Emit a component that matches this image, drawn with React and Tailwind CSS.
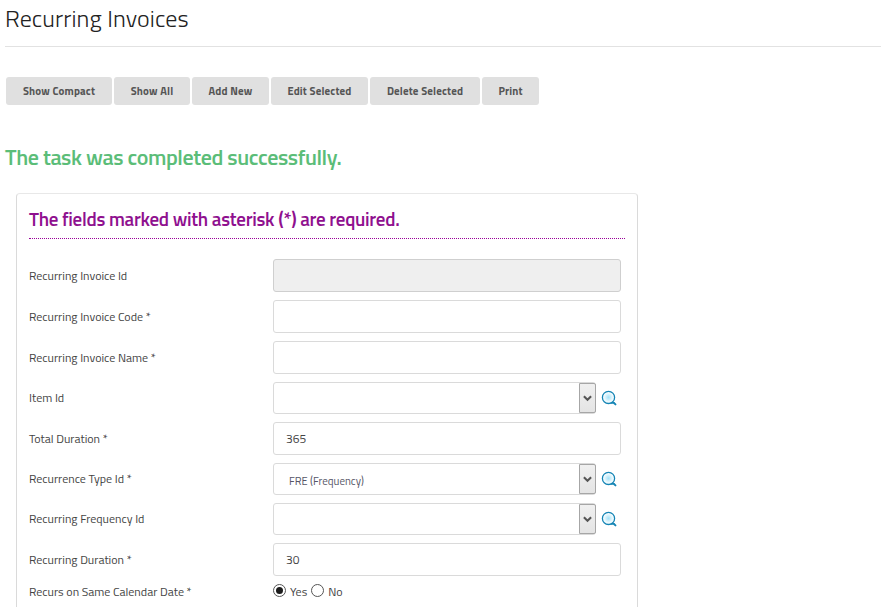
import React from "react";

const actions = [
  { label: "Show Compact", width: "w-[106px]" },
  { label: "Show All", width: "w-[76px]" },
  { label: "Add New", width: "w-[77px]" },
  { label: "Edit Selected", width: "w-[97px]" },
  { label: "Delete Selected", width: "w-[110px]" },
  { label: "Print", width: "w-[57px]" },
];

const fields = [
  { label: "Recurring Invoice Id", type: "disabled" },
  { label: "Recurring Invoice Code *", type: "text" },
  { label: "Recurring Invoice Name *", type: "text" },
  { label: "Item Id", type: "select" },
  { label: "Total Duration *", type: "text", value: "365" },
  { label: "Recurrence Type Id *", type: "select", value: "FRE (Frequency)" },
  { label: "Recurring Frequency Id", type: "select" },
  { label: "Recurring Duration *", type: "text", value: "30" },
];

function SearchIcon() {
  return (
    <svg width="16" height="16" viewBox="0 0 16 16" className="ml-[5px] mt-[8px] shrink-0">
      <defs>
        <radialGradient id="lens">
          <stop offset="0" stopColor="#a5e2f8" />
          <stop offset="0.4" stopColor="#cdeffb" />
          <stop offset="0.8" stopColor="#f8fdff" />
        </radialGradient>
      </defs>
      <circle cx="7.5" cy="7.4" r="6.1" fill="url(#lens)" stroke="#1585b5" strokeWidth="1.3" />
      <path d="M10.4 12.9h2.8M13.2 13.2l1.3 1.2" stroke="#1585b5" strokeWidth="1.9" strokeLinecap="round" />
    </svg>
  );
}

function SelectBox({ value }) {
  return (
    <div className="flex">
      <div className="flex h-8 w-[323px] rounded-[3px] border border-[#dadada] bg-white">
        <span className="flex-1 pl-[15px] pt-[9px] text-[11px] leading-4 text-[#555566]">{value}</span>
        <span className="-mr-px flex h-[30px] w-[17px] items-center justify-center rounded-r-[2px] border border-[#a6a6a6] bg-linear-to-b from-[#f0f0f0] to-[#e4e4e4]">
          <svg width="9" height="7" viewBox="0 0 9 7">
            <path d="M0.9 1.2L4.5 4.8l3.6-3.6" fill="none" stroke="#555" strokeWidth="2" />
          </svg>
        </span>
      </div>
      <SearchIcon />
    </div>
  );
}

function Field({ label, type, value }) {
  const select = type === "select";
  return (
    <div className={`mb-2 flex ${select ? "h-8" : "h-[33px]"}`}>
      <label className={`w-[244px] shrink-0 text-[12px] leading-4 ${select ? "pt-[8px]" : "pt-[9px]"}`}>{label}</label>
      {select ? (
        <SelectBox value={value} />
      ) : (
        <div
          className={`flex h-[33px] w-[348px] items-center rounded-[3px] border pl-3 text-[12px] ${
            type === "disabled" ? "border-[#cfcfcf] bg-[#efefef]" : "border-[#dadada] bg-white"
          }`}
        >
          {value}
        </div>
      )}
    </div>
  );
}

function Radio({ checked }) {
  return (
    <span className="flex size-[13px] items-center justify-center rounded-full border border-[#555] bg-white">
      {checked && <span className="size-[7px] rounded-full bg-[#1c1c1c]" />}
    </span>
  );
}

export default function App() {
  return (
    <div className="h-[607px] w-[881px] overflow-hidden bg-white font-['Titillium_Web',Roboto,sans-serif] text-[#444]">
      <header className="ml-[5px] h-[47px] border-b border-[#e2e2e2]">
        <h1 className="pt-[2px] text-[24px] leading-8 font-light tracking-[0.1px] text-[#222]">Recurring Invoices</h1>
      </header>
      <nav className="ml-[6px] mt-[30px] flex gap-[2px]">
        {actions.map((a) => (
          <button key={a.label} className={`h-7 rounded-[3px] bg-[#e0e0e0] text-center text-[11px] font-bold tracking-[0.15px] text-[#555] ${a.width}`}>
            {a.label}
          </button>
        ))}
      </nav>
      <p className="ml-[5px] mt-[36px] text-[22px] leading-8 font-semibold tracking-[-0.42px] text-[#5bbd78]">
        The task was completed successfully.
      </p>
      <section className="ml-4 mt-[20px] h-[440px] w-[622px] rounded-[4px] border border-[#dadada] border-t-[#e8e8e8] px-3">
        <h2 className="h-[45px] border-b border-dotted border-[#990099] pt-[11px] text-[19px] leading-7 font-semibold tracking-[-0.29px] text-[#8f108f]">
          The fields marked with asterisk (*) are required.
        </h2>
        <form className="pt-5">
          {fields.map((f) => (
            <Field key={f.label} {...f} />
          ))}
          <div className="flex h-4 text-[12px] leading-4">
            <span className="w-[244px]">Recurs on Same Calendar Date *</span>
            <span className="flex">
              <Radio checked />
              <span className="ml-1 mr-1">Yes</span>
              <Radio />
              <span className="ml-1">No</span>
            </span>
          </div>
        </form>
      </section>
    </div>
  );
}
